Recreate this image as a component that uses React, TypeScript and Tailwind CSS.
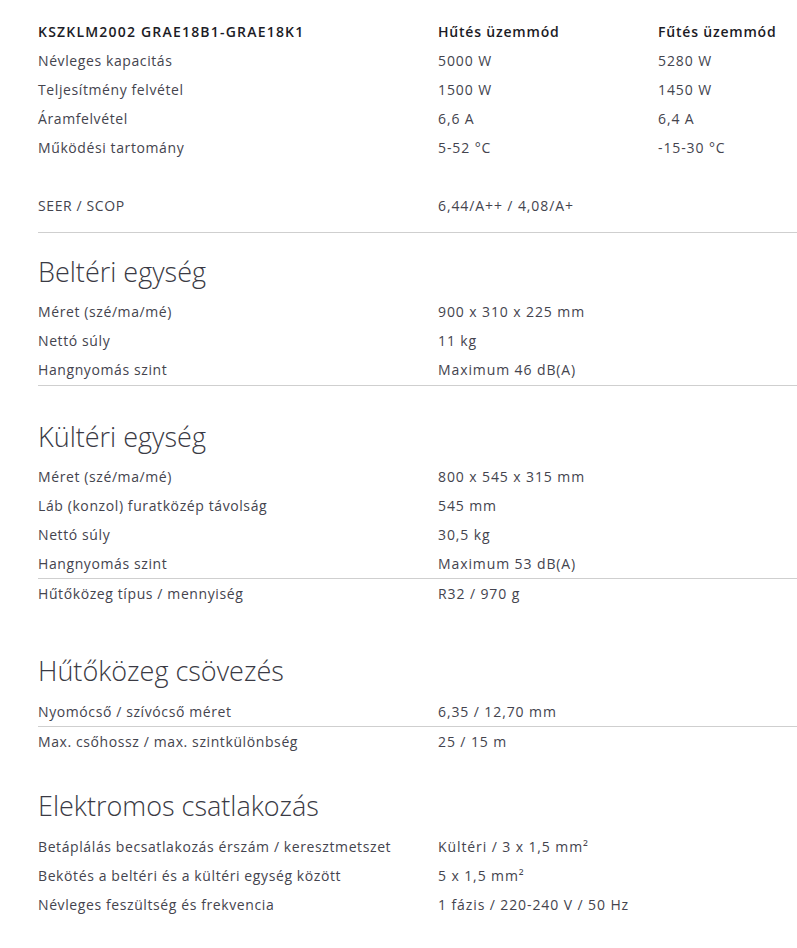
import React from "react";

type Row = { label: string; a?: string; b?: string };

const font = { fontFamily: '"Open Sans", "Noto Sans", sans-serif' };

function SpecRow({ r, bold }: { r: Row; bold?: boolean }) {
  return (
    <div
      className={
        "flex h-[29px] items-center text-[14px] " +
        (bold ? "font-semibold text-[#1c1c26]" : "text-[#44444e]")
      }
    >
      <div className={"w-[400px] shrink-0 whitespace-nowrap " + (bold ? "tracking-[1.2px]" : "tracking-[0.6px]")}>
        {r.label}
      </div>
      <div className={"w-[220px] shrink-0 whitespace-nowrap " + (bold ? "tracking-[0.8px]" : "tracking-[0.9px]")}>
        {r.a ?? ""}
      </div>
      <div className={"flex-1 whitespace-nowrap " + (bold ? "tracking-[0.8px]" : "tracking-[0.9px]")}>
        {r.b ?? ""}
      </div>
    </div>
  );
}

function Heading({ children, className }: { children: React.ReactNode; className: string }) {
  return (
    <h2 className={"text-[27px] font-light leading-[32px] text-[#3a3a44] " + className}>
      {children}
    </h2>
  );
}

export default function App() {
  return (
    <div className="min-h-[948px] w-[797px] overflow-hidden bg-white" style={font}>
      <div className="pl-[38px]">
        {/* Main spec table */}
        <div className="border-b border-[#cfcfcf] pt-[17px] pb-[12px]">
          <SpecRow bold r={{ label: "KSZKLM2002 GRAE18B1-GRAE18K1", a: "Hűtés üzemmód", b: "Fűtés üzemmód" }} />
          <SpecRow r={{ label: "Névleges kapacitás", a: "5000 W", b: "5280 W" }} />
          <SpecRow r={{ label: "Teljesítmény felvétel", a: "1500 W", b: "1450 W" }} />
          <SpecRow r={{ label: "Áramfelvétel", a: "6,6 A", b: "6,4 A" }} />
          <SpecRow r={{ label: "Működési tartomány", a: "5-52 °C", b: "-15-30 °C" }} />
          <SpecRow r={{ label: "" }} />
          <SpecRow r={{ label: "SEER / SCOP", a: "6,44/A++ / 4,08/A+" }} />
        </div>

        {/* Beltéri egység */}
        <Heading className="pt-[23px] pb-[9px]">Beltéri egység</Heading>
        <div className="border-b border-[#cfcfcf] pb-[1px]">
          <SpecRow r={{ label: "Méret (szé/ma/mé)", a: "900 x 310 x 225 mm" }} />
          <SpecRow r={{ label: "Nettó súly", a: "11 kg" }} />
          <SpecRow r={{ label: "Hangnyomás szint", a: "Maximum 46 dB(A)" }} />
        </div>

        {/* Kültéri egység */}
        <Heading className="pt-[35px] pb-[9px]">Kültéri egység</Heading>
        <div className="border-b border-[#cfcfcf]">
          <SpecRow r={{ label: "Méret (szé/ma/mé)", a: "800 x 545 x 315 mm" }} />
          <SpecRow r={{ label: "Láb (konzol) furatközép távolság", a: "545 mm" }} />
          <SpecRow r={{ label: "Nettó súly", a: "30,5 kg" }} />
          <SpecRow r={{ label: "Hangnyomás szint", a: "Maximum 53 dB(A)" }} />
        </div>
        <SpecRow r={{ label: "Hűtőközeg típus / mennyiség", a: "R32 / 970 g" }} />

        {/* Hűtőközeg csövezés */}
        <Heading className="pt-[47px] pb-[10px]">Hűtőközeg csövezés</Heading>
        <div className="border-b border-[#cfcfcf]">
          <SpecRow r={{ label: "Nyomócső / szívócső méret", a: "6,35 / 12,70 mm" }} />
        </div>
        <SpecRow r={{ label: "Max. csőhossz / max. szintkülönbség", a: "25 / 15 m" }} />

        {/* Elektromos csatlakozás */}
        <Heading className="pt-[34px] pb-[10px]">Elektromos csatlakozás</Heading>
        <SpecRow r={{ label: "Betáplálás becsatlakozás érszám / keresztmetszet", a: "Kültéri / 3 x 1,5 mm²" }} />
        <SpecRow r={{ label: "Bekötés a beltéri és a kültéri egység között", a: "5 x 1,5 mm²" }} />
        <SpecRow r={{ label: "Névleges feszültség és frekvencia", a: "1 fázis / 220-240 V / 50 Hz" }} />
      </div>
    </div>
  );
}
